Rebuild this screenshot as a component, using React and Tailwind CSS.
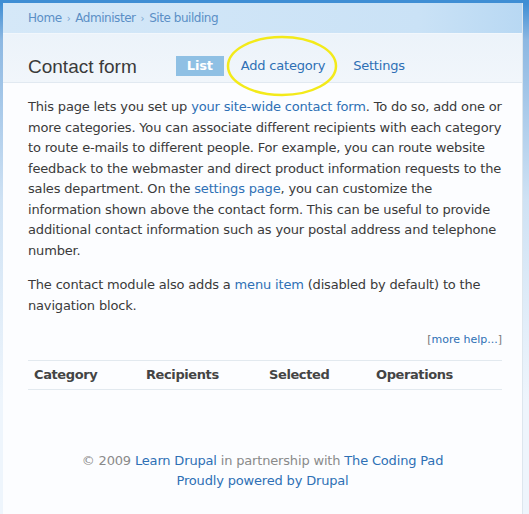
import React from "react";

const body = { fontFamily: '"DejaVu Sans", Verdana, Tahoma, sans-serif' };

export default function App() {
  return (
    <div className="w-[529px] h-[514px] overflow-hidden bg-[linear-gradient(180deg,#3f8ed4_0px,#3f8ed4_3px,#8db8e2_40px,#cfe2f4_200px,#eef5fc_400px)]">
      <div className="mt-[3px] ml-[3px] mr-[6px] h-[511px] bg-[#fcfdff] border-r border-[#dde6ee] flex flex-col" style={body}>
        {/* breadcrumb band */}
        <div className="h-[31px] shrink-0 flex items-center pl-[25px] text-[12px] tracking-[-0.45px] text-[#5b8fc6] bg-[linear-gradient(90deg,#d5e8f8,#cae2f6_80%,#b8d8f3)] border-b border-[#f2f7fc]">
          <span>Home</span>
          <span className="mx-[5px] text-[10px] text-[#7aa3cf]">›</span>
          <span>Administer</span>
          <span className="mx-[5px] text-[10px] text-[#7aa3cf]">›</span>
          <span>Site building</span>
        </div>
        {/* title area */}
        <div className="relative h-[49px] shrink-0 flex items-center pl-[25px] pt-[16px] bg-[linear-gradient(180deg,#ecf3fa,#f1f6fb)] border-b border-[#e1e9f1]">
          <h1 className="text-[19px] text-[#3a3a3a] leading-none" style={{ fontFamily: '"Liberation Sans", Arial, sans-serif' }}>
            Contact form
          </h1>
          <div className="ml-[39px] flex items-center text-[13px] tracking-[-0.2px]">
            <span className="h-[20px] w-[48px] justify-center flex items-center bg-[#8fc0e4] text-white font-bold">List</span>
            <span className="ml-[17px] text-[#2e70b5]">Add category</span>
            <span className="ml-[28px] text-[#2e70b5]">Settings</span>
          </div>
          <svg className="absolute left-[222px] top-[0px]" width="115" height="64" viewBox="0 0 115 64">
            <ellipse cx="57" cy="32" rx="54" ry="29" fill="none" stroke="#f3ea1a" strokeWidth="2.5" />
          </svg>
        </div>
        {/* content */}
        <div className="px-[25px] pr-[20px] pt-[14px] text-[13px] tracking-[-0.17px] leading-[20.5px] text-[#3a3a3a]">
          <p>
            This page lets you set up <span className="text-[#2e70b5]">your site-wide contact form</span>. To do so, add one or more categories. You can associate different recipients with each category to route e-mails to different people. For example, you can route website feedback to the webmaster and direct product information requests to the sales department. On the <span className="text-[#2e70b5]">settings page</span>, you can customize the information shown above the contact form. This can be useful to provide additional contact information such as your postal address and telephone number.
          </p>
          <p className="mt-[14px]">
            The contact module also adds a <span className="text-[#2e70b5]">menu item</span> (disabled by default) to the navigation block.
          </p>
          <div className="mt-[17px] flex justify-end text-[11px] tracking-normal leading-[14px] text-[#777]">
            <span>[<span className="text-[#2e70b5]">more help...</span>]</span>
          </div>
          <div className="mt-[13px] h-[30px] border-t border-b border-[#e2e9ef] flex items-center font-bold text-[#444] text-[13px] tracking-[-0.4px]">
            <span className="w-[118px] pl-[6px]">Category</span>
            <span className="w-[123px]">Recipients</span>
            <span className="w-[107px]">Selected</span>
            <span>Operations</span>
          </div>
        </div>
        {/* footer */}
        <div className="mt-[61px] text-center text-[13px] tracking-[-0.17px] leading-[20px] text-[#8a8a8a]">
          <div>
            © 2009 <span className="text-[#2e70b5]">Learn Drupal</span> in partnership with <span className="text-[#2e70b5]">The Coding Pad</span>
          </div>
          <div className="text-[#2e70b5]">Proudly powered by Drupal</div>
        </div>
      </div>
    </div>
  );
}
